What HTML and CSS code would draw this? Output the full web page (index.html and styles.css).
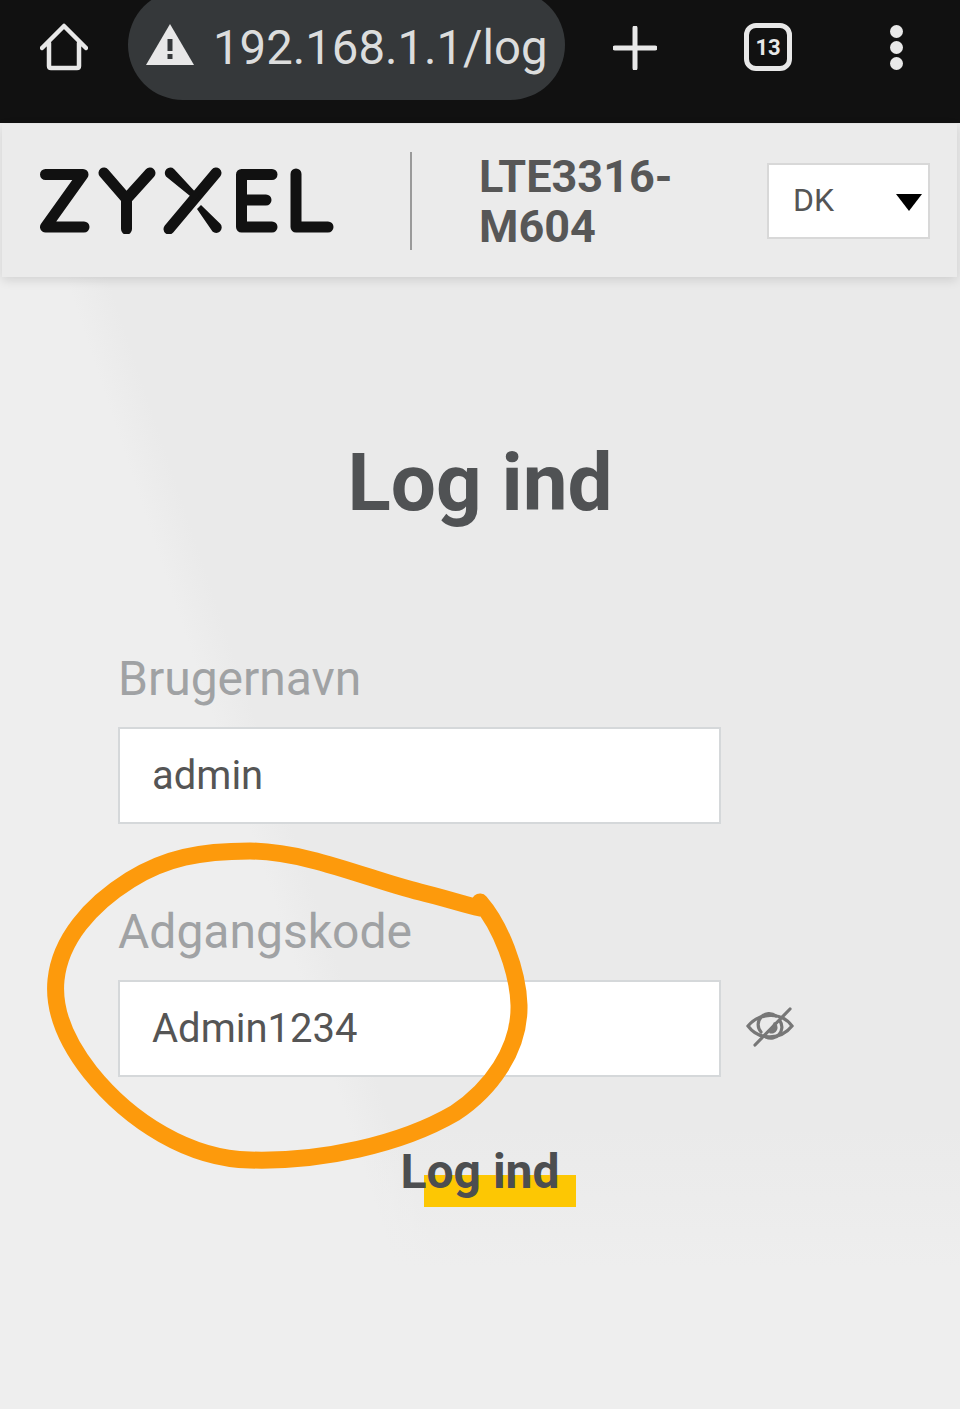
FILE: index.html
```html
<!DOCTYPE html>
<html lang="da">
<head>
<meta charset="utf-8">
<title>Log ind</title>
<link rel="stylesheet" href="styles.css">
</head>
<body>
<div class="page">
  <div class="browser-bar">
    <svg class="home-icon" viewBox="0 0 48 48" width="48" height="48"><path d="M2 25 24 3l22 22M9 20v23q0 2 2 2h26q2 0 2-2V20" fill="none" stroke="#e8e8e8" stroke-width="4.500" stroke-linecap="round" stroke-linejoin="round"/></svg>
    <div class="omnibox">
      <svg class="warn-icon" viewBox="0 0 48 42" width="48" height="42"><path d="M24 0 48 41H0Z" fill="#e8e8e8"/><path d="M21.500 15h5v12h-5zM21.500 30h5v5h-5z" fill="#35383a"/></svg>
      <span class="url">192.168.1.1/log</span>
    </div>
    <svg class="plus-icon" viewBox="0 0 44 44" width="44" height="44"><path d="M22 2v40M2 22h40" stroke="#e8e8e8" stroke-width="5" stroke-linecap="round"/></svg>
    <div class="tabs">13</div>
    <div class="dots"><i></i><i></i><i></i></div>
  </div>

  <header class="site-header">
    <svg class="logo" viewBox="38 166 298 68" width="298" height="68" role="img" aria-label="Zyxel">
      <g fill="none" stroke="#111" stroke-width="11" stroke-linecap="round" stroke-linejoin="round">
        <path d="M45.500 174.500H83L45.500 227H84"/>
        <path d="M104 173 126.500 199 150 173M126.500 199V229"/>
        <path d="M216 173 169 229"/>
        <path d="M272 174.500H241.500V227H272M241.500 200H266"/>
        <path d="M296 174V227H328"/>
      </g>
      <path d="M174 169 199 196 195 200 166 176.500A5.500 5.500 0 0 1 174 169ZM220.500 224A5.500 5.500 0 0 1 212.500 231.500L197 209 201 205Z" fill="#111"/>
    </svg>
    <div class="divider"></div>
    <div class="model">LTE3316-<br>M604</div>
    <div class="lang"><span>DK</span><b class="caret"></b></div>
  </header>

  <main class="login">
    <h1 class="title">Log ind</h1>
    <div class="field">
      <label class="label">Brugernavn</label>
      <div class="input">admin</div>
    </div>
    <div class="field field-pass">
      <label class="label">Adgangskode</label>
      <div class="input-row">
        <div class="input">Admin1234</div>
        <svg class="eye" viewBox="0 0 48 40" width="48" height="40"><g fill="none" stroke="#777" stroke-width="3.200" stroke-linecap="round"><path d="M2 19C13 6 35 4 46 19 35 33 13 34 2 19Z"/><path d="M15 25A11 11 0 0 1 30 9M34 14A11 11 0 0 1 20 30"/><path d="M44 2 9 38"/></g><path d="M28 15A6 6 0 0 1 23 26Z" fill="#777"/></svg>
      </div>
    </div>
    <div class="submit"><span class="mark"></span><span class="submit-text">Log ind</span></div>
  </main>

  <svg class="scribble" viewBox="0 0 960 1409" width="960" height="1409"><path d="M480 902C500 925 518 970 519 1005 520 1050 490 1090 455 1113 400 1145 320 1162 250 1160 190 1159 130 1122 90 1072 65 1040 53 1010 56 980 60 940 90 905 130 880 165 858 200 851 250 851 310 852 370 880 420 892 445 898 465 905 480 908" fill="none" stroke="#fd9a0c" stroke-width="17" stroke-linecap="round" stroke-linejoin="round"/></svg>
</div>
</body>
</html>
```
FILE: styles.css
```css
* { box-sizing: border-box; }
html, body { margin: 0; padding: 0; }
body { font-family: Roboto, "Liberation Sans", sans-serif; background: #ebebeb; }
.page { position: relative; width: 960px; height: 1409px; overflow: hidden;
  background:
    linear-gradient(180deg, rgba(238,238,238,0) 80%, #eeeeee 90%),
    linear-gradient(71.5deg, #eeeeee 0, #eeeeee 31%, #eaeaea 34%, #eaeaea 100%); }

.browser-bar { display: flex; align-items: flex-start; height: 123px; background: #111; }
.home-icon { margin: 23px 0 0 40px; flex: none; }
.omnibox { display: flex; align-items: center; flex: none; width: 437px; height: 110px; margin: -10px 0 0 40px; padding: 10px 0 0 18px; border-radius: 55px; background: #35383a; overflow: hidden; }
.warn-icon { flex: none; margin-top: -10px; }
.url { margin-left: 19px; font-size: 47.300px; line-height: 60px; color: #dcdddd; white-space: nowrap; margin-top: -5px; }
.plus-icon { flex: none; margin: 26px 0 0 48px; }
.tabs { flex: none; display: flex; align-items: center; justify-content: center; width: 48px; height: 48px; margin: 23px 0 0 87px; border: 5px solid #e8e8e8; border-radius: 12px; color: #e8e8e8; font-size: 22px; font-weight: 700; }
.dots { flex: none; display: flex; flex-direction: column; gap: 3px; margin: 25px 0 0 98px; }
.dots i { display: block; width: 13px; height: 13px; border-radius: 50%; background: #e8e8e8; }

.site-header { display: flex; align-items: center; height: 153px; margin: 1px 3px 0 2px; background: #ebebeb; box-shadow: 0 3px 10px rgba(0,0,0,.12); }
.logo { flex: none; margin: -1px 0 0 36px; }
.divider { flex: none; width: 2px; height: 98px; margin-left: 74px; background: #9a9a9a; }
.model { flex: none; width: 288px; margin: 3px 0 0 67px; font-size: 45px; line-height: 50px; font-weight: 700; color: #575757; }
.lang { flex: none; display: flex; align-items: center; justify-content: space-between; width: 163px; height: 76px; padding: 0 6px 0 24px; background: #fff; border: 2px solid #d8d8d8; }
.lang span { margin-top: -2px; font-size: 32px; color: #555; }
.caret { width: 0; height: 0; margin-top: 3px; border-left: 13px solid transparent; border-right: 13px solid transparent; border-top: 17px solid #000; }

.login { display: flex; flex-direction: column; padding: 0 0 0 118px; }
.title { width: 724px; margin: 161px 0 0; font-size: 80px; line-height: 90px; font-weight: 700; color: #505254; text-align: center; }
.field { width: 603px; }
.label { display: block; margin-bottom: 18px; font-size: 48px; line-height: 60px; color: #a0a2a4; }
.title + .field { margin-top: 121px; }
.field-pass { margin-top: 78px; }
.input { flex: none; width: 603px; height: 97px; padding-left: 32px; background: #fff; border: 2px solid #d5d8da; font-size: 40px; line-height: 93px; color: #555; }
.input-row { display: flex; align-items: center; width: 700px; gap: 25px; }
.eye { flex: none; margin-top: -3px; }
.submit { position: relative; width: 724px; margin-top: 67px; text-align: center; }
.submit-text { position: relative; font-size: 48px; line-height: 56px; font-weight: 700; color: #4c4e50; }
.mark { position: absolute; left: 306px; top: 31px; width: 152px; height: 32px; background: #fdc703; }

.scribble { position: absolute; left: 0; top: 0; pointer-events: none; }
```
